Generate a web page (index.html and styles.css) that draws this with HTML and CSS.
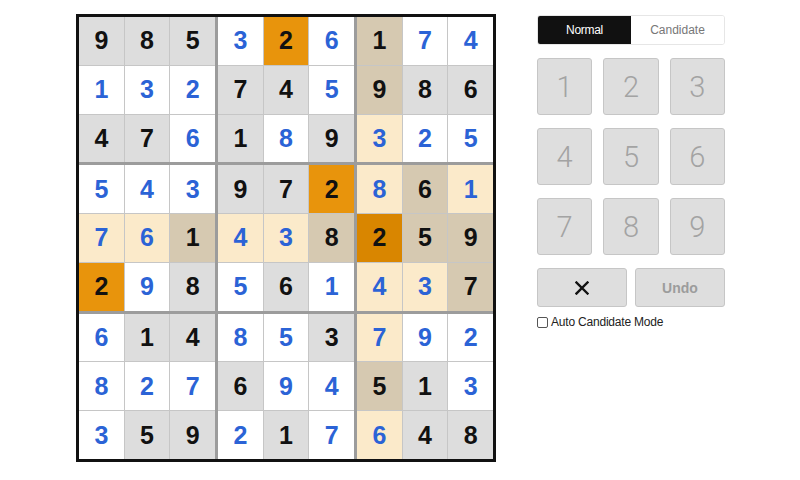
FILE: index.html
```html
<!DOCTYPE html>
<html>
<head>
<meta charset="utf-8">
<link rel="stylesheet" href="styles.css">
</head>
<body>
<main class="page">
  <div class="board">
    <div class="box">
      <div class="cell g k">9</div><div class="cell g k">8</div><div class="cell g k">5</div>
      <div class="cell w">1</div><div class="cell w">3</div><div class="cell w">2</div>
      <div class="cell g k">4</div><div class="cell g k">7</div><div class="cell w">6</div>
    </div>
    <div class="box">
      <div class="cell w">3</div><div class="cell o k">2</div><div class="cell w">6</div>
      <div class="cell g k">7</div><div class="cell g k">4</div><div class="cell w">5</div>
      <div class="cell g k">1</div><div class="cell w">8</div><div class="cell g k">9</div>
    </div>
    <div class="box">
      <div class="cell t k">1</div><div class="cell w">7</div><div class="cell w">4</div>
      <div class="cell t k">9</div><div class="cell g k">8</div><div class="cell g k">6</div>
      <div class="cell m">3</div><div class="cell w">2</div><div class="cell w">5</div>
    </div>
    <div class="box">
      <div class="cell w">5</div><div class="cell w">4</div><div class="cell w">3</div>
      <div class="cell m">7</div><div class="cell m">6</div><div class="cell t k">1</div>
      <div class="cell o k">2</div><div class="cell w">9</div><div class="cell g k">8</div>
    </div>
    <div class="box">
      <div class="cell g k">9</div><div class="cell g k">7</div><div class="cell o k">2</div>
      <div class="cell m">4</div><div class="cell m">3</div><div class="cell t k">8</div>
      <div class="cell w">5</div><div class="cell g k">6</div><div class="cell w">1</div>
    </div>
    <div class="box">
      <div class="cell m">8</div><div class="cell t k">6</div><div class="cell m">1</div>
      <div class="cell d k">2</div><div class="cell t k">5</div><div class="cell t k">9</div>
      <div class="cell m">4</div><div class="cell m">3</div><div class="cell t k">7</div>
    </div>
    <div class="box">
      <div class="cell w">6</div><div class="cell g k">1</div><div class="cell g k">4</div>
      <div class="cell w">8</div><div class="cell w">2</div><div class="cell w">7</div>
      <div class="cell w">3</div><div class="cell g k">5</div><div class="cell g k">9</div>
    </div>
    <div class="box">
      <div class="cell w">8</div><div class="cell w">5</div><div class="cell g k">3</div>
      <div class="cell g k">6</div><div class="cell w">9</div><div class="cell w">4</div>
      <div class="cell w">2</div><div class="cell g k">1</div><div class="cell w">7</div>
    </div>
    <div class="box">
      <div class="cell m">7</div><div class="cell w">9</div><div class="cell w">2</div>
      <div class="cell t k">5</div><div class="cell g k">1</div><div class="cell w">3</div>
      <div class="cell m">6</div><div class="cell g k">4</div><div class="cell g k">8</div>
    </div>
  </div>

  <aside class="panel">
    <div class="toggle">
      <div class="mode active">Normal</div>
      <div class="mode">Candidate</div>
    </div>
    <div class="keys">
      <div class="key">1</div><div class="key">2</div><div class="key">3</div>
      <div class="key">4</div><div class="key">5</div><div class="key">6</div>
      <div class="key">7</div><div class="key">8</div><div class="key">9</div>
    </div>
    <div class="actions">
      <div class="action erase">
        <svg width="14" height="14" viewBox="0 0 14 14"><path d="M1.5 1.5 L12.5 12.5 M12.5 1.5 L1.5 12.5" stroke="#111" stroke-width="2.4" stroke-linecap="square" fill="none"/></svg>
      </div>
      <div class="action undo">Undo</div>
    </div>
    <label class="auto"><span class="box-check"></span>Auto Candidate Mode</label>
  </aside>
</main>
</body>
</html>
```

FILE: styles.css
```css
html, body {
  margin: 0;
  padding: 0;
  background: #ffffff;
}
.page {
  display: flex;
  align-items: flex-start;
  gap: 41px;
  padding: 14px 0 0 76px;
  font-family: "Liberation Sans", Arial, sans-serif;
}
.board {
  width: 414px;
  height: 442px;
  border: 3px solid #111111;
  background: #9c9c9c;
  display: grid;
  grid-template-columns: repeat(3, 1fr);
  grid-template-rows: repeat(3, 1fr);
  gap: 3px;
}
.box {
  background: #c6c6c6;
  display: grid;
  grid-template-columns: repeat(3, 1fr);
  grid-template-rows: repeat(3, 1fr);
  gap: 1px;
}
.cell {
  display: flex;
  align-items: center;
  justify-content: center;
  font-weight: bold;
  font-size: 25px;
  color: #2b63d6;
}
.cell.k { color: #111111; }
.cell.g { background: #dddddd; }
.cell.w { background: #ffffff; }
.cell.o { background: #e8940c; }
.cell.d { background: #d98600; }
.cell.t { background: #d6c9b1; }
.cell.m { background: #fbeaca; }

.panel {
  width: 188px;
  margin-top: 1px;
  display: flex;
  flex-direction: column;
}
.toggle {
  display: flex;
  height: 30px;
  border: 1px solid #e6e6e6;
  border-radius: 3px;
  overflow: hidden;
  box-sizing: border-box;
}
.mode {
  flex: 1;
  display: flex;
  align-items: center;
  justify-content: center;
  font-size: 12px;
  color: #777777;
  background: #ffffff;
}
.mode.active {
  background: #111111;
  color: #ffffff;
  letter-spacing: -0.3px;
}
.keys {
  margin-top: 13px;
  display: grid;
  grid-template-columns: repeat(3, 1fr);
  grid-auto-rows: 57px;
  column-gap: 11px;
  row-gap: 13px;
}
.key, .action {
  background: #dedede;
  border: 1px solid #c6c6c6;
  border-radius: 3px;
  box-sizing: border-box;
  display: flex;
  align-items: center;
  justify-content: center;
}
.key {
  font-family: Roboto, "Liberation Sans", sans-serif;
  font-weight: 300;
  font-size: 29px;
  color: #a3a3a3;
}
.actions {
  margin-top: 13px;
  display: grid;
  grid-template-columns: 1fr 1fr;
  gap: 8px;
}
.action {
  height: 39px;
}
.undo {
  font-weight: bold;
  font-size: 14px;
  color: #9c9c9c;
}
.auto {
  margin-top: 8px;
  display: flex;
  align-items: center;
  gap: 3px;
  font-size: 12px;
  letter-spacing: -0.2px;
  color: #222222;
}
.box-check {
  width: 9px;
  height: 9px;
  border: 1px solid #555555;
  border-radius: 2px;
  background: #fff;
}
```
